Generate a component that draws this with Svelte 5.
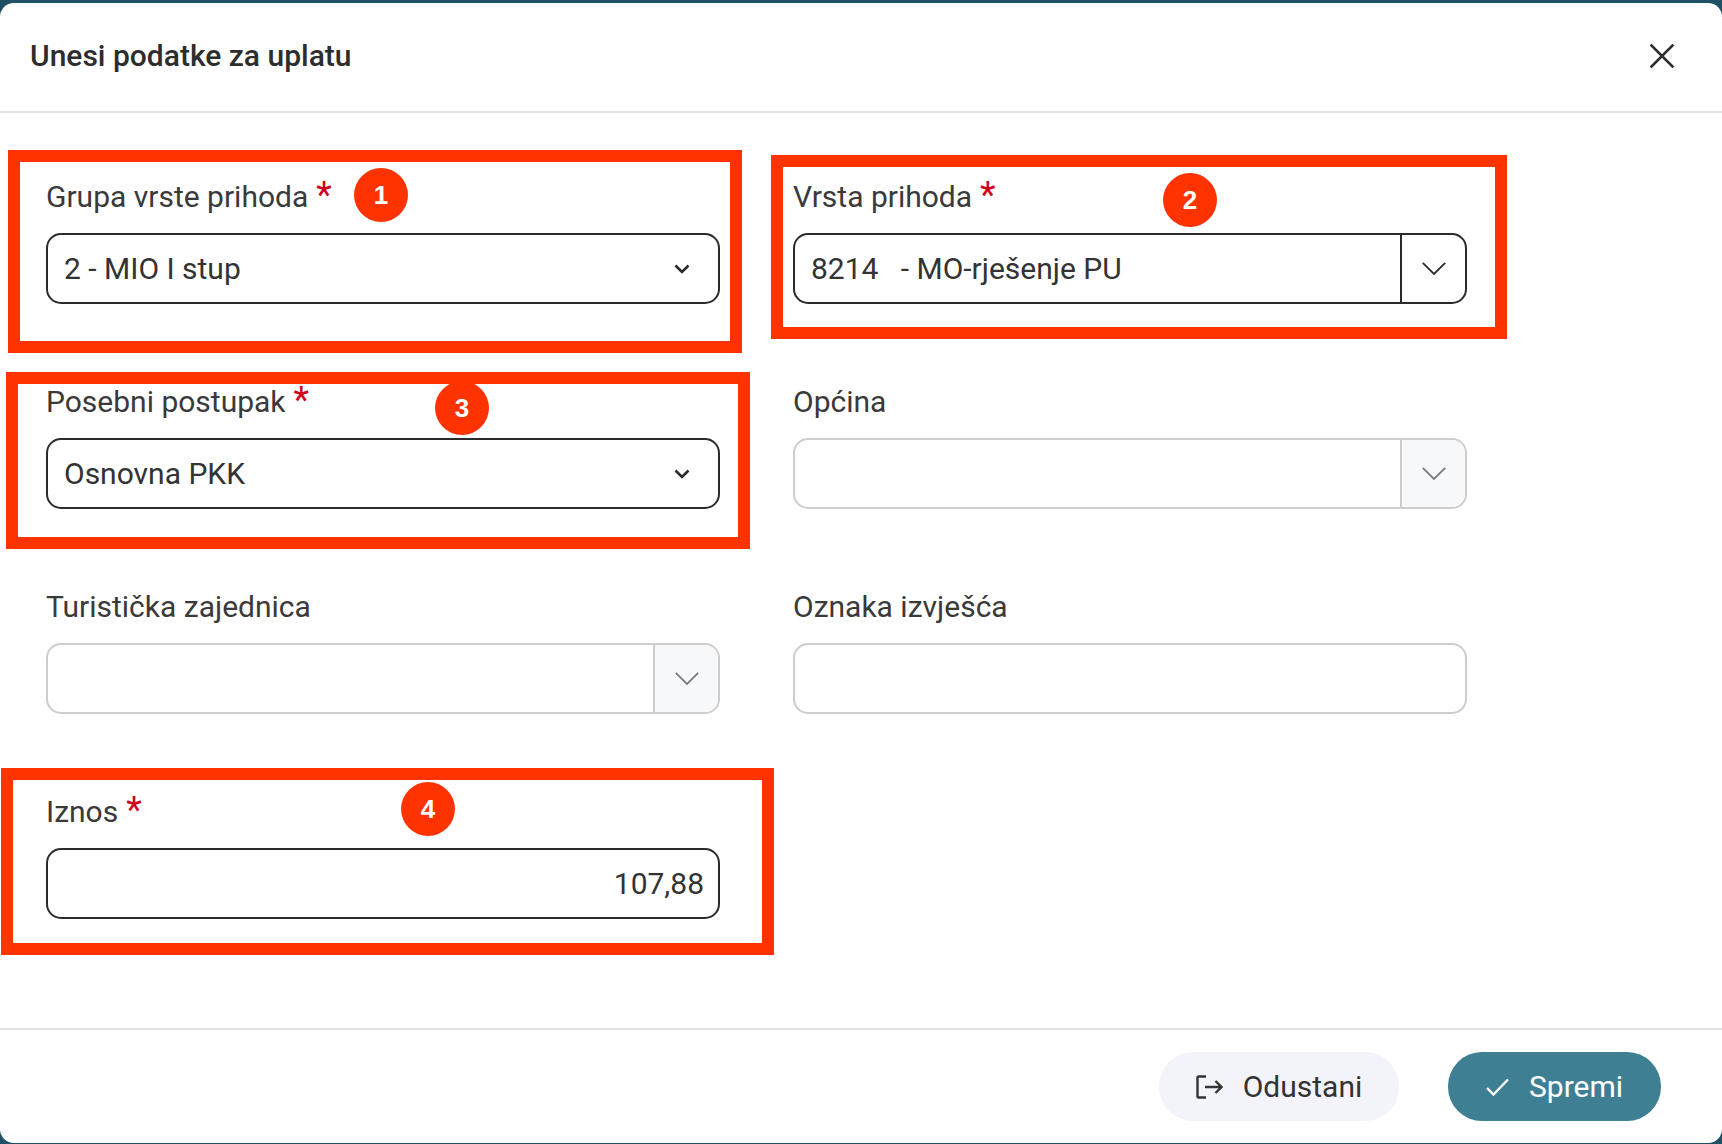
<script lang="ts">
  type Field = {
    label: string;
    kind: 'select' | 'combo' | 'input';
    value?: string;
    required?: boolean;
    disabled?: boolean;
    numeric?: boolean;
  };

  const fields: Field[] = [
    { label: 'Grupa vrste prihoda', kind: 'select', value: '2 - MIO I stup', required: true },
    { label: 'Vrsta prihoda', kind: 'combo', value: '8214   - MO-rješenje PU', required: true },
    { label: 'Posebni postupak', kind: 'select', value: 'Osnovna PKK', required: true },
    { label: 'Općina', kind: 'combo', disabled: true },
    { label: 'Turistička zajednica', kind: 'combo', disabled: true },
    { label: 'Oznaka izvješća', kind: 'input', disabled: true },
    { label: 'Iznos', kind: 'input', value: '107,88', required: true, numeric: true }
  ];

  // red annotations painted over the screenshot
  const marks = [
    { n: 1, x: 8, y: 150, w: 734, h: 203, bx: 381, by: 195 },
    { n: 2, x: 771, y: 155, w: 736, h: 184, bx: 1190, by: 200 },
    { n: 3, x: 6, y: 372, w: 744, h: 177, bx: 462, by: 408 },
    { n: 4, x: 1, y: 768, w: 773, h: 187, bx: 428, by: 809 }
  ];
</script>

<div class="page">
  <div class="modal">
    <header class="modal-head">
      <h1>Unesi podatke za uplatu</h1>
      <button class="close" aria-label="Zatvori">
        <svg viewBox="0 0 24 24" width="26" height="26"><path d="M1.5 1.5l21 21M22.5 1.5l-21 21" /></svg>
      </button>
    </header>

    <main class="modal-body">
      {#each fields as f (f.label)}
        <div class="field">
          <div class="label">{f.label}{#if f.required}<span class="req">*</span>{/if}</div>
          <div class="control" class:disabled={f.disabled} class:numeric={f.numeric}>
            <span class="value">{f.value ?? ''}</span>
            {#if f.kind === 'select'}
              <svg class="caret" viewBox="0 0 16 10" width="16" height="10"><path d="M1.5 1.5L8 8l6.500-6.500" /></svg>
            {:else if f.kind === 'combo'}
              <span class="addon">
                <svg viewBox="0 0 24 13" width="24" height="13"><path d="M.8.8L12 12 23.200.8" /></svg>
              </span>
            {/if}
          </div>
        </div>
      {/each}
    </main>

    <footer class="modal-foot">
      <button class="btn btn-light">
        <svg viewBox="0 0 27 24" width="27" height="24">
          <path d="M10 1.500H2.500a1 1 0 0 0-1 1v19a1 1 0 0 0 1 1H10M9 12h16.500M19.500 6l6 6-6 6" />
        </svg>
        Odustani
      </button>
      <button class="btn btn-primary">
        <svg viewBox="0 0 23 18" width="23" height="18"><path d="M1 10l6.500 6.500L22 1.500" /></svg>
        Spremi
      </button>
    </footer>
  </div>

  {#each marks as m (m.n)}
    <div class="mark" style="left:{m.x}px;top:{m.y}px;width:{m.w}px;height:{m.h}px"></div>
    <div class="badge" style="left:{m.bx - 27}px;top:{m.by - 27}px">{m.n}</div>
  {/each}
</div>

<style>
  :global(body) {
    margin: 0;
    background: #1f5064;
  }

  .page {
    position: relative;
    width: 1722px;
    height: 1144px;
    overflow: hidden;
    padding-top: 3px;
    box-sizing: border-box;
    font-family: Roboto, "Liberation Sans", sans-serif;
    color: #333;
  }

  .modal {
    height: 1140px;
    background: #fff;
    border-radius: 14px;
    display: flex;
    flex-direction: column;
  }

  .modal-head {
    height: 110px;
    flex: none;
    box-sizing: border-box;
    border-bottom: 2px solid #dee2e6;
    padding: 0 47px 3px 30px;
    display: flex;
    align-items: center;
    justify-content: space-between;
  }

  h1 {
    margin: 0;
    font-size: 30px;
    font-weight: 500;
    color: #2d2d2d;
  }

  .close {
    border: 0;
    background: none;
    padding: 0;
    display: flex;
  }

  .close path {
    fill: none;
    stroke: #2d2d2d;
    stroke-width: 2.600;
  }

  .modal-body {
    flex: 1;
    padding: 66px 0 0 46px;
    display: grid;
    grid-template-columns: 674px 674px;
    grid-auto-rows: min-content;
    column-gap: 73px;
    row-gap: 80px;
  }

  .label {
    height: 36px;
    margin-bottom: 18px;
    font-size: 30px;
    line-height: 36px;
    color: #3a3a3a;
    white-space: nowrap;
  }

  .req {
    color: #d0021b;
    margin-left: 8px;
    font-size: 36px;
    line-height: 30px;
  }

  .control {
    height: 71px;
    box-sizing: border-box;
    border: 2px solid #2b2b2b;
    border-radius: 15px;
    display: flex;
    align-items: center;
    overflow: hidden;
    font-size: 30px;
  }

  .control.disabled {
    border-color: #cdcdcd;
  }

  .value {
    flex: 1;
    padding: 0 14px 0 16px;
    white-space: pre;
    color: #333;
  }

  .numeric .value {
    text-align: right;
  }

  .caret {
    margin-right: 28px;
  }

  .caret path {
    fill: none;
    stroke: #2b2b2b;
    stroke-width: 2.600;
  }

  .addon {
    width: 65px;
    height: 100%;
    box-sizing: border-box;
    border-left: 2px solid #2b2b2b;
    display: flex;
    align-items: center;
    justify-content: center;
  }

  .addon path {
    fill: none;
    stroke: #2b2b2b;
    stroke-width: 1.800;
  }

  .disabled .addon {
    border-left-color: #cdcdcd;
    background: #f7f8fa;
  }

  .disabled .addon path {
    stroke: #7b7b7b;
  }

  .modal-foot {
    height: 115px;
    flex: none;
    box-sizing: border-box;
    border-top: 2px solid #dee2e6;
    padding: 22px 61px 0 0;
    display: flex;
    justify-content: flex-end;
    align-items: flex-start;
    gap: 49px;
  }

  .btn {
    height: 69px;
    border: 0;
    border-radius: 34px;
    display: flex;
    align-items: center;
    justify-content: center;
    gap: 20px;
    font-family: inherit;
    font-size: 30px;
  }

  .btn path {
    fill: none;
    stroke-width: 2.400;
  }

  .btn-light {
    width: 240px;
    background: #f3f4fa;
    color: #333;
  }

  .btn-light path {
    stroke: #333;
  }

  .btn-primary {
    width: 213px;
    background: #3f7f93;
    color: #fff;
  }

  .btn-primary path {
    stroke: #fff;
  }

  .mark {
    position: absolute;
    box-sizing: border-box;
    border: 12px solid #ff3300;
    pointer-events: none;
  }

  .badge {
    position: absolute;
    width: 54px;
    height: 54px;
    border-radius: 50%;
    background: #ff3300;
    color: #fff;
    font-family: "Liberation Sans", sans-serif;
    font-size: 26px;
    font-weight: 700;
    display: flex;
    align-items: center;
    justify-content: center;
  }
</style>
